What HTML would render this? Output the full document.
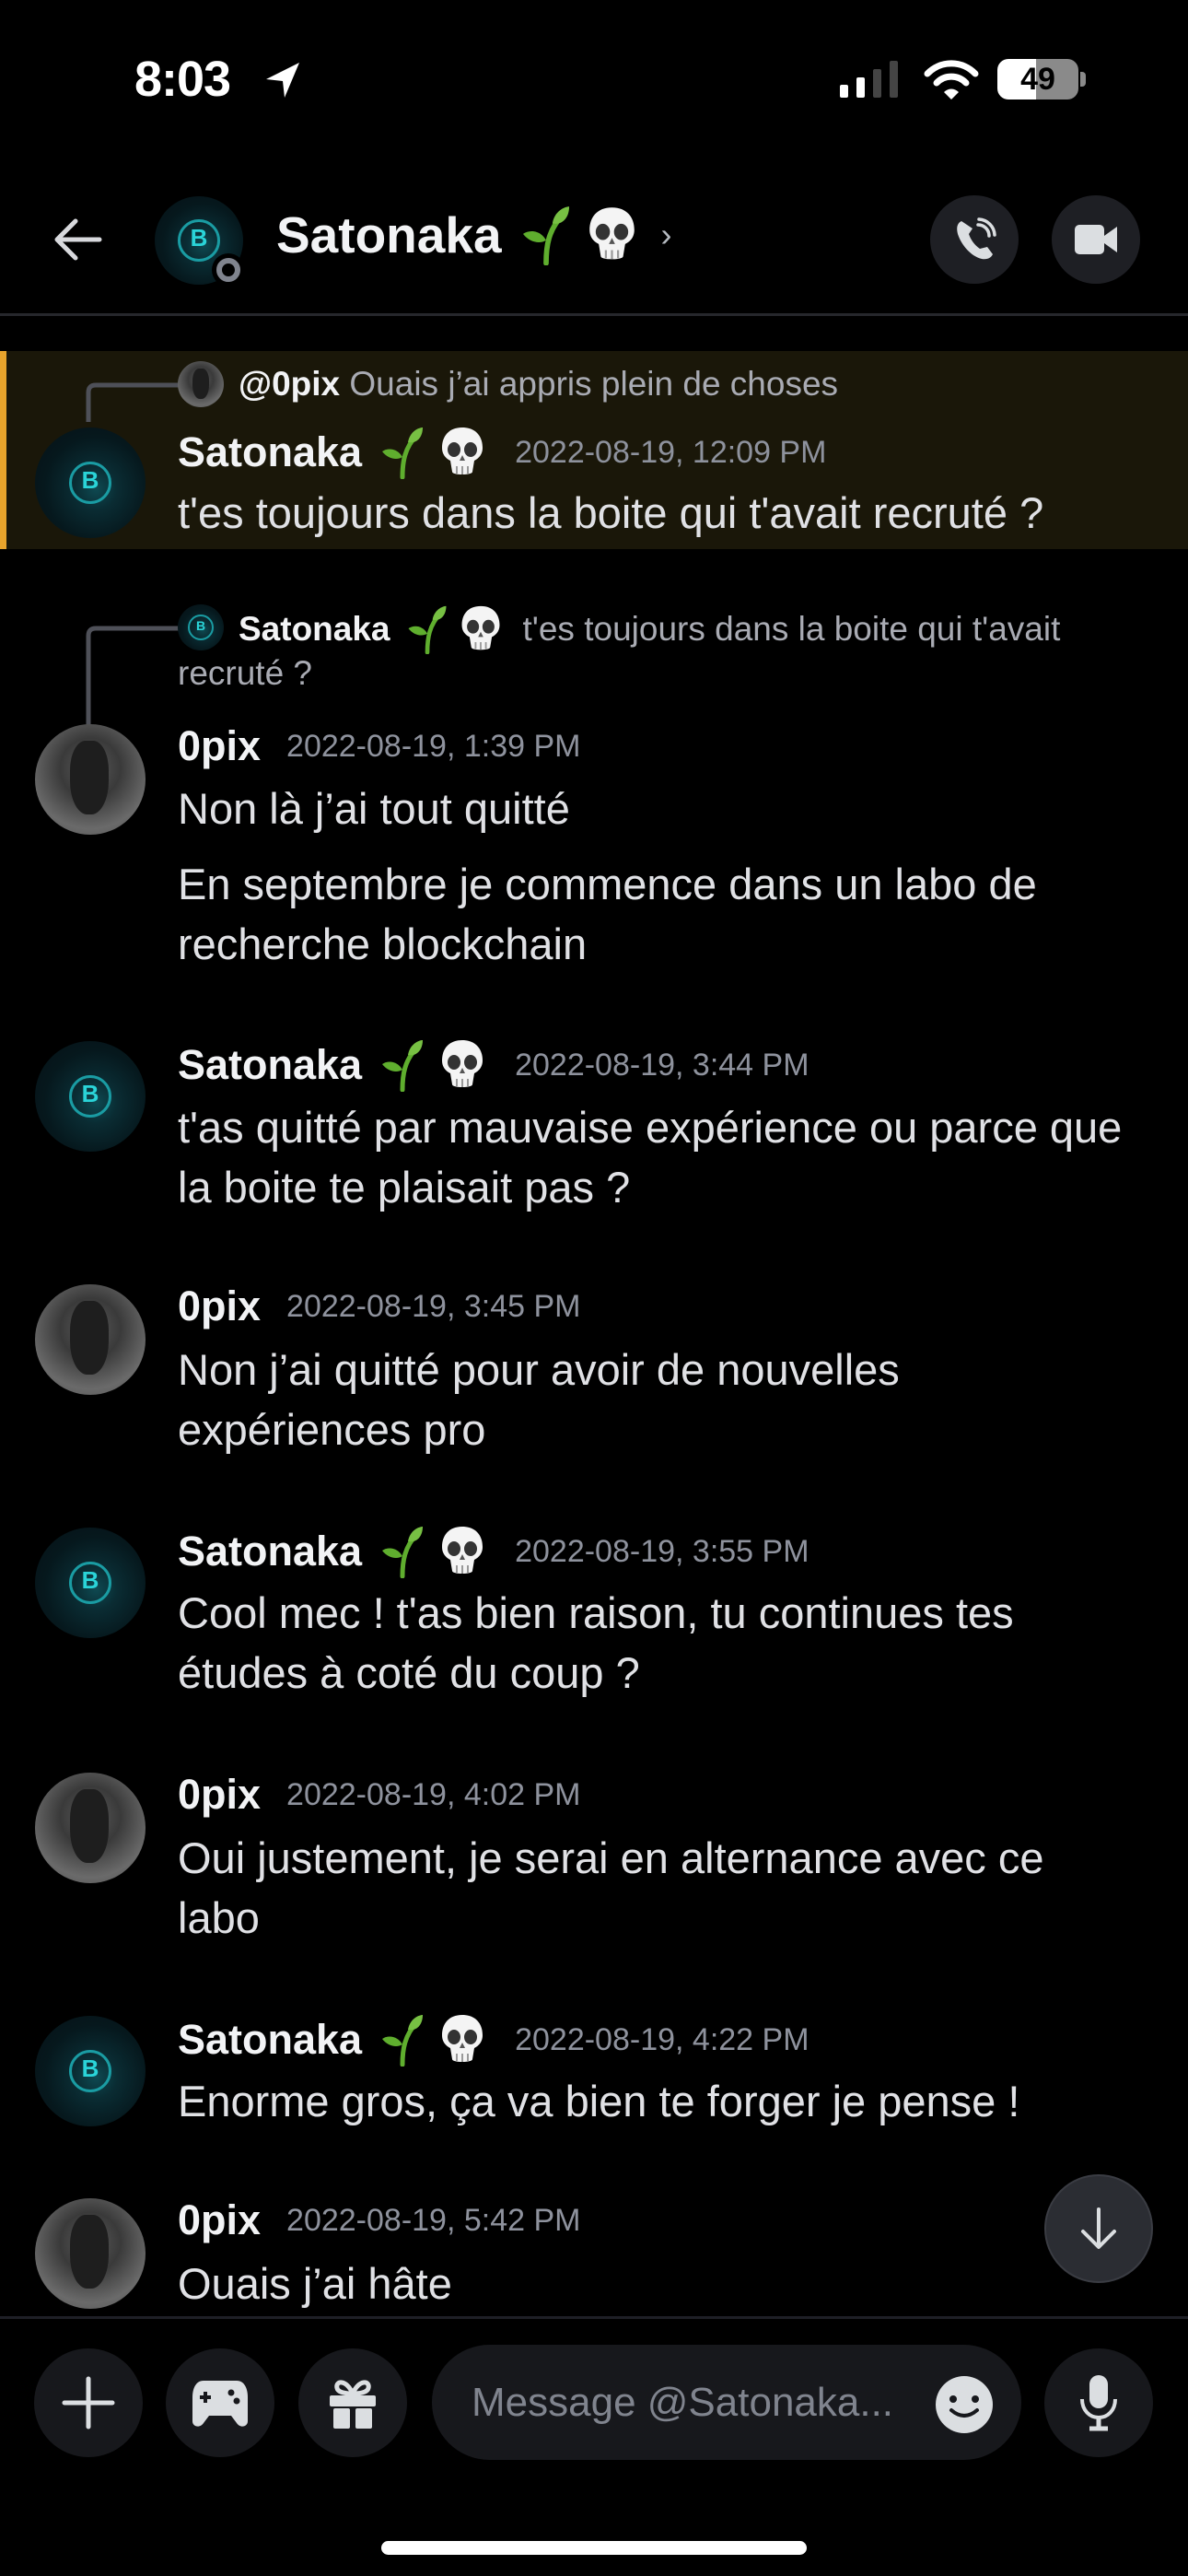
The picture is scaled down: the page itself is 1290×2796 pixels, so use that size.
<!DOCTYPE html>
<html><head><meta charset="utf-8"><style>
*{margin:0;padding:0;box-sizing:border-box}
body{width:1290px;height:2796px;background:#000;position:relative;overflow:hidden;font-family:"Liberation Sans",sans-serif;color:#dfe0e4}
.a{position:absolute;white-space:nowrap}
.nm{font-weight:bold;font-size:45px;line-height:54px;color:#f2f3f5;display:flex;align-items:center}
.ts{font-size:34px;color:#8e929d;font-weight:normal;margin-left:28px}
.tx{font-size:47px;line-height:65px;color:#e0e1e5}
.av{position:absolute;width:120px;height:120px;border-radius:50%;left:38px;overflow:hidden}
.sat{background:radial-gradient(circle at 55% 55%,#0e4a52 0,#0a2c33 25%,#06181d 60%,#041015 100%)}
.sat::after{content:"B";position:absolute;left:50%;top:50%;transform:translate(-50%,-50%);color:#2ad4d8;font:bold 26px "Liberation Sans",sans-serif;border:3px solid #1a9ca3;border-radius:50%;width:40px;height:40px;text-align:center;line-height:35px}
.sm.sat::after{font-size:14px;width:24px;height:24px;line-height:20px;border-width:2px}
.opx{background:radial-gradient(circle at 50% 40%,#5a5a5a 0,#3a3a3a 35%,#6a6a6a 70%,#505050 100%)}
.opx::after{content:"";position:absolute;left:32%;top:15%;width:35%;height:67%;border-radius:40% 40% 45% 45%;background:#1e1e1e}
.rc{position:absolute;border-radius:50%;background:#1e1f24}
.em{display:inline-block;vertical-align:middle;flex:none}
</style></head><body>

<svg width="0" height="0" style="position:absolute"><defs>
<g id="sp"><path d="M24 56 C24 40 26 24 40 10" stroke="#5fae2e" stroke-width="5" fill="none" stroke-linecap="round"/><path d="M30 18 C32 6 42 2 46 2 C46 12 40 20 30 18Z" fill="#77c043"/><path d="M24 34 C18 24 8 24 2 28 C8 36 18 38 24 34Z" fill="#5fae2e"/></g>
<g id="sk"><path d="M25 2 C10 2 3 12 3 24 C3 32 8 36 12 38 L14 50 C14 54 36 54 36 50 L38 38 C42 36 47 32 47 24 C47 12 40 2 25 2Z" fill="#f4f4f4"/><ellipse cx="16" cy="26" rx="7" ry="8" fill="#333"/><ellipse cx="34" cy="26" rx="7" ry="8" fill="#333"/><path d="M25 32 L22 38 H28Z" fill="#555"/><path d="M19 44 V52 M25 44 V53 M31 44 V52" stroke="#999" stroke-width="2"/></g>
</defs></svg>

<!-- status bar -->
<div class="a" style="left:146px;top:56px;font-weight:bold;font-size:54px;line-height:60px;color:#fff;letter-spacing:-1px">8:03</div>
<svg class="a" style="left:285px;top:64px" width="46" height="46" viewBox="0 0 46 46"><path d="M40 4 L4 22 L22 24 L24 42 Z" fill="#fff"/></svg>
<svg class="a" style="left:912px;top:66px" width="70" height="40" viewBox="0 0 70 40"><rect x="0" y="26" width="9" height="14" rx="2" fill="#fff"/><rect x="18" y="18" width="9" height="22" rx="2" fill="#fff"/><rect x="36" y="9" width="9" height="31" rx="2" fill="#444"/><rect x="54" y="0" width="9" height="40" rx="2" fill="#444"/></svg>
<svg class="a" style="left:1003px;top:64px" width="60" height="44" viewBox="0 0 60 44"><path d="M4 16 A36 36 0 0 1 56 16" stroke="#fff" stroke-width="7" fill="none" stroke-linecap="round"/><path d="M14 26 A22 22 0 0 1 46 26" stroke="#fff" stroke-width="7" fill="none" stroke-linecap="round"/><path d="M22 36 L30 44 L38 36 A11 11 0 0 0 22 36Z" fill="#fff"/></svg>
<div class="a" style="left:1083px;top:64px;width:88px;height:44px;border-radius:12px;background:linear-gradient(90deg,#fff 0,#fff 48%,#8a8a8a 48%);color:#000;font:bold 34px/44px 'Liberation Sans',sans-serif;text-align:center">49</div>
<div class="a" style="left:1173px;top:78px;width:6px;height:16px;border-radius:0 4px 4px 0;background:#8a8a8a"></div>

<!-- header -->
<svg class="a" style="left:56px;top:234px" width="56" height="52" viewBox="0 0 56 52"><path d="M52 26 H6 M26 6 L6 26 L26 46" stroke="#d8d9dd" stroke-width="5" fill="none" stroke-linecap="round" stroke-linejoin="round"/></svg>
<div class="av sat" style="left:168px;top:213px;width:96px;height:96px"></div>
<div class="a" style="left:230px;top:275px;width:36px;height:36px;border-radius:50%;background:#000"></div>
<div class="a" style="left:235px;top:280px;width:26px;height:26px;border-radius:50%;border:6px solid #80848e"></div>
<div class="a nm" style="left:300px;top:222px;font-size:55px;line-height:60px">Satonaka<svg class="em" style="margin-left:16px" width="64" height="66" viewBox="0 0 48 58"><use href="#sp"/></svg><svg class="em" style="margin-left:8px" width="63" height="64" viewBox="0 0 50 58"><use href="#sk"/></svg><span style="font-weight:normal;font-size:36px;color:#b5bac1;margin-left:22px">›</span></div>
<div class="rc" style="left:1010px;top:212px;width:96px;height:96px"></div>
<svg class="a" style="left:1036px;top:236px" width="46" height="48" viewBox="0 0 46 48"><path d="M8 4 C4 6 2 10 4 18 C8 30 18 42 30 45 C36 46 40 44 42 40 L36 32 L28 34 C22 30 18 24 16 18 L20 12 Z" fill="#dbdee1"/><path d="M26 8 A12 12 0 0 1 38 20 M27 2 A18 18 0 0 1 44 19" stroke="#dbdee1" stroke-width="3.5" fill="none" stroke-linecap="round"/></svg>
<div class="rc" style="left:1142px;top:212px;width:96px;height:96px"></div>
<svg class="a" style="left:1165px;top:240px" width="52" height="40" viewBox="0 0 52 40"><rect x="2" y="4" width="32" height="32" rx="5" fill="#dbdee1"/><path d="M34 16 L48 6 V34 L34 24Z" fill="#dbdee1"/></svg>
<div class="a" style="left:0;top:340px;width:1290px;height:3px;background:#26272c"></div>

<!-- highlight -->
<div class="a" style="left:0;top:381px;width:1290px;height:215px;background:#1a1709;border-left:7px solid #e8a42c"></div>
<svg class="a" style="left:90px;top:410px" width="110" height="50" viewBox="0 0 110 50"><path d="M6 48 V16 Q6 8 14 8 H104" stroke="#4e5058" stroke-width="5" fill="none"/></svg>
<div class="av opx" style="left:193px;top:392px;width:50px;height:50px"></div>
<div class="a" style="left:259px;top:394px;font-size:37px;line-height:46px;color:#a9abb3"><b style="color:#f2f3f5">@0pix</b> Ouais j’ai appris plein de choses</div>
<div class="av sat" style="top:464px"></div>
<div class="a nm" style="left:193px;top:462px">Satonaka<svg class="em" style="margin-left:16px" width="56" height="58" viewBox="0 0 48 58"><use href="#sp"/></svg><svg class="em" style="margin-left:8px" width="58" height="58" viewBox="0 0 50 58"><use href="#sk"/></svg><span class="ts">2022-08-19, 12:09 PM</span></div>
<div class="a tx" style="left:193px;top:524px">t'es toujours dans la boite qui t'avait recruté ?</div>

<!-- reply 2 -->
<svg class="a" style="left:90px;top:674px" width="110" height="120" viewBox="0 0 110 120"><path d="M6 118 V16 Q6 8 14 8 H104" stroke="#4e5058" stroke-width="5" fill="none"/></svg>
<div class="av sat sm" style="left:193px;top:656px;width:50px;height:50px"></div>
<div class="a" style="left:259px;top:656px;font-size:37px;line-height:50px;color:#a9abb3;display:flex;align-items:center"><b style="color:#f2f3f5">Satonaka</b><svg class="em" style="margin-left:12px" width="56" height="54" viewBox="0 0 48 58"><use href="#sp"/></svg><svg class="em" style="margin-left:4px" width="52" height="54" viewBox="0 0 50 58"><use href="#sk"/></svg><span style="margin-left:20px">t'es toujours dans la boite qui t'avait</span></div>
<div class="a" style="left:193px;top:708px;font-size:37px;line-height:46px;color:#a9abb3">recruté ?</div>

<!-- Opix 1:39 -->
<div class="av opx" style="top:786px"></div>
<div class="a nm" style="left:193px;top:783px">0pix<span class="ts">2022-08-19, 1:39 PM</span></div>
<div class="a tx" style="left:193px;top:845px">Non là j’ai tout quitté</div>
<div class="a tx" style="left:193px;top:927px">En septembre je commence dans un labo de<br>recherche blockchain</div>

<!-- Sat 3:44 -->
<div class="av sat" style="top:1130px"></div>
<div class="a nm" style="left:193px;top:1127px">Satonaka<svg class="em" style="margin-left:16px" width="56" height="58" viewBox="0 0 48 58"><use href="#sp"/></svg><svg class="em" style="margin-left:8px" width="58" height="58" viewBox="0 0 50 58"><use href="#sk"/></svg><span class="ts">2022-08-19, 3:44 PM</span></div>
<div class="a tx" style="left:193px;top:1191px">t'as quitté par mauvaise expérience ou parce que<br>la boite te plaisait pas ?</div>

<!-- Opix 3:45 -->
<div class="av opx" style="top:1394px"></div>
<div class="a nm" style="left:193px;top:1391px">0pix<span class="ts">2022-08-19, 3:45 PM</span></div>
<div class="a tx" style="left:193px;top:1454px">Non j’ai quitté pour avoir de nouvelles<br>expériences pro</div>

<!-- Sat 3:55 -->
<div class="av sat" style="top:1658px"></div>
<div class="a nm" style="left:193px;top:1655px">Satonaka<svg class="em" style="margin-left:16px" width="56" height="58" viewBox="0 0 48 58"><use href="#sp"/></svg><svg class="em" style="margin-left:8px" width="58" height="58" viewBox="0 0 50 58"><use href="#sk"/></svg><span class="ts">2022-08-19, 3:55 PM</span></div>
<div class="a tx" style="left:193px;top:1718px">Cool mec ! t'as bien raison, tu continues tes<br>études à coté du coup ?</div>

<!-- Opix 4:02 -->
<div class="av opx" style="top:1924px"></div>
<div class="a nm" style="left:193px;top:1921px">0pix<span class="ts">2022-08-19, 4:02 PM</span></div>
<div class="a tx" style="left:193px;top:1984px">Oui justement, je serai en alternance avec ce<br>labo</div>

<!-- Sat 4:22 -->
<div class="av sat" style="top:2188px"></div>
<div class="a nm" style="left:193px;top:2185px">Satonaka<svg class="em" style="margin-left:16px" width="56" height="58" viewBox="0 0 48 58"><use href="#sp"/></svg><svg class="em" style="margin-left:8px" width="58" height="58" viewBox="0 0 50 58"><use href="#sk"/></svg><span class="ts">2022-08-19, 4:22 PM</span></div>
<div class="a tx" style="left:193px;top:2248px">Enorme gros, ça va bien te forger je pense !</div>

<!-- Opix 5:42 -->
<div class="av opx" style="top:2386px"></div>
<div class="a nm" style="left:193px;top:2383px">0pix<span class="ts">2022-08-19, 5:42 PM</span></div>
<div class="a tx" style="left:193px;top:2446px">Ouais j’ai hâte</div>

<!-- scroll down -->
<div class="rc" style="left:1134px;top:2360px;width:118px;height:118px;background:#2b2d33;border:2px solid #3a3c43"></div>
<svg class="a" style="left:1170px;top:2394px" width="46" height="50" viewBox="0 0 46 50"><path d="M23 4 V44 M6 28 L23 45 L40 28" stroke="#dbdee1" stroke-width="4" fill="none" stroke-linecap="round" stroke-linejoin="round"/></svg>

<div class="a" style="left:0;top:2514px;width:1290px;height:3px;background:#1e1f26"></div>

<!-- bottom bar -->
<div class="rc" style="left:37px;top:2549px;width:118px;height:118px;background:#17181c"></div>
<svg class="a" style="left:66px;top:2578px" width="60" height="60" viewBox="0 0 60 60"><path d="M30 4 V56 M4 30 H56" stroke="#dbdee1" stroke-width="5" stroke-linecap="round"/></svg>
<div class="rc" style="left:180px;top:2549px;width:118px;height:118px;background:#17181c"></div>
<svg class="a" style="left:207px;top:2580px" width="64" height="56" viewBox="0 0 64 56"><path d="M14 4 H50 C58 4 62 12 62 22 V48 C62 54 54 56 50 50 L44 42 H20 L14 50 C10 56 2 54 2 48 V22 C2 12 6 4 14 4Z" fill="#dbdee1"/><path d="M16 16 V28 M10 22 H22" stroke="#17181c" stroke-width="4"/><circle cx="44" cy="17" r="3.5" fill="#17181c"/><circle cx="50" cy="26" r="3.5" fill="#17181c"/></svg>
<div class="rc" style="left:324px;top:2549px;width:118px;height:118px;background:#17181c"></div>
<svg class="a" style="left:354px;top:2580px" width="58" height="58" viewBox="0 0 58 58"><path d="M29 18 C22 2 10 4 12 12 C13 17 22 18 29 18 C36 18 45 17 46 12 C48 4 36 2 29 18Z" fill="none" stroke="#dbdee1" stroke-width="5"/><rect x="4" y="20" width="50" height="12" rx="2" fill="#dbdee1"/><rect x="8" y="34" width="18" height="22" rx="2" fill="#dbdee1"/><rect x="32" y="34" width="18" height="22" rx="2" fill="#dbdee1"/></svg>
<div class="rc" style="left:469px;top:2545px;width:640px;height:125px;border-radius:63px;background:#17181c"></div>
<div class="a" style="left:512px;top:2580px;font-size:44px;line-height:56px;color:#80848e">Message @Satonaka...</div>
<svg class="a" style="left:1015px;top:2578px" width="64" height="64" viewBox="0 0 64 64"><circle cx="32" cy="32" r="31" fill="#dbdee1"/><circle cx="20" cy="26" r="4" fill="#17181c"/><circle cx="44" cy="26" r="4" fill="#17181c"/><path d="M18 38 Q32 50 46 38" stroke="#17181c" stroke-width="4" fill="none" stroke-linecap="round"/></svg>
<div class="rc" style="left:1134px;top:2549px;width:118px;height:118px;background:#17181c"></div>
<svg class="a" style="left:1170px;top:2576px" width="46" height="64" viewBox="0 0 46 64"><rect x="13" y="2" width="20" height="36" rx="10" fill="#dbdee1"/><path d="M5 28 C5 40 13 48 23 48 C33 48 41 40 41 28" stroke="#dbdee1" stroke-width="4" fill="none"/><path d="M23 48 V58 M13 60 H33" stroke="#dbdee1" stroke-width="5"/></svg>

<div class="a" style="left:414px;top:2758px;width:462px;height:15px;border-radius:8px;background:#fff"></div>
</body></html>
